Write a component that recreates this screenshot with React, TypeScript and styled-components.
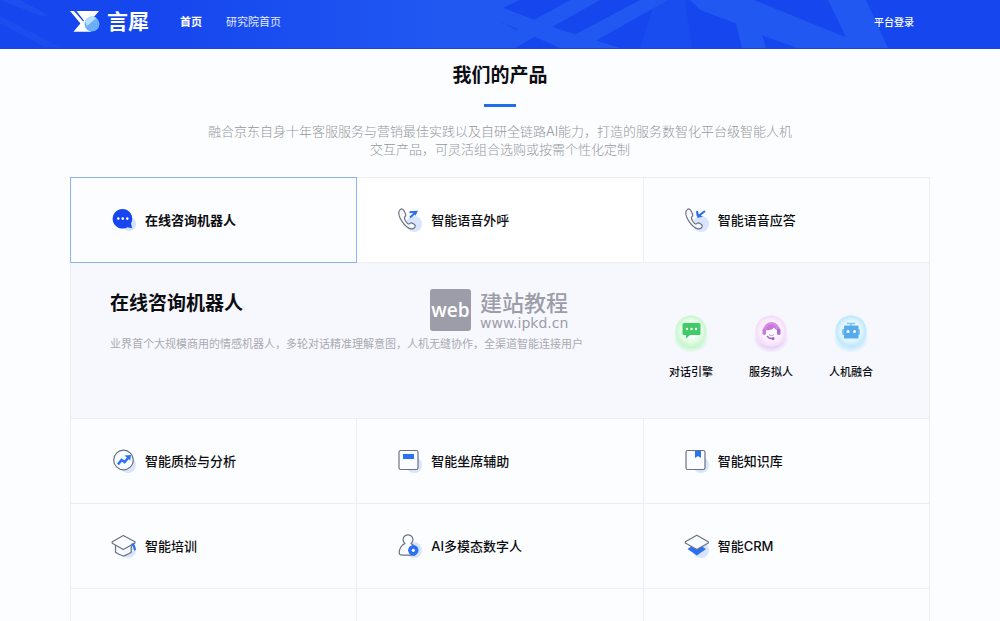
import React from "react";
import styled, { createGlobalStyle, css } from "styled-components";

const GlobalStyle = createGlobalStyle`
  * { box-sizing: border-box; }
  body {
    margin: 0;
    background: #fcfdff;
    color: #0c0d10;
    font-family: Inter, "Noto Sans CJK SC", sans-serif;
  }
  h1, h2, p, ul { margin: 0; padding: 0; }
  button { font: inherit; color: inherit; }
`;

const Page = styled.div`
  height: 100vh;
  overflow-x: hidden;
  overflow-y: auto;
  scrollbar-width: none;
`;

const Header = styled.header`
  position: relative;
  display: flex;
  align-items: center;
  height: 49px;
  padding: 0 7% 4px;
  background: #1546ee;
  border-bottom: 1px solid #1a46d6;
  color: #fff;
`;

const HeaderArt = styled.svg`
  position: absolute;
  inset: 0;
  width: 100%;
  height: 100%;
`;

const Brand = styled.a`
  position: relative;
  display: flex;
  align-items: center;
  gap: 6px;
  color: #fff;
  font-size: 21px;
  line-height: 24px;
  font-weight: 700;
  text-decoration: none;
`;

const Nav = styled.nav`
  position: relative;
  display: flex;
  flex: 1;
  gap: 24px;
  margin-left: 31px;
`;

const NavLink = styled.a<{ $active?: boolean }>`
  color: ${(p) => (p.$active ? "#fff" : "#e3eaff")};
  font-size: 11px;
  line-height: 16px;
  font-weight: ${(p) => (p.$active ? 700 : 400)};
  text-decoration: none;
`;

const Login = styled.button`
  position: relative;
  margin-right: 16px;
  padding: 0;
  border: 0;
  background: none;
  color: #fff;
  font-size: 10px;
  line-height: 16px;
  font-weight: 500;
`;

const Main = styled.main`
  padding: 13px 7% 0;
`;

const Intro = styled.section`
  display: flex;
  flex-direction: column;
  align-items: center;
  text-align: center;
`;

const Title = styled.h1`
  font-size: 19px;
  line-height: 28px;
  font-weight: 700;
`;

const Rule = styled.span`
  width: 32px;
  height: 3px;
  margin: 14px 0 15px;
  background: #1f6fe8;
`;

const Lead = styled.p`
  max-width: 590px;
  color: #96979b;
  font-size: 13px;
  line-height: 18px;
  font-weight: 300;
`;

const Products = styled.section`
  display: grid;
  grid-template-columns: repeat(3, 1fr);
  margin-top: 19px;
  padding: 1px 0 0 1px;
`;

const edge = css`
  margin: -1px 0 0 -1px;
  border: 1px solid #eceef2;
`;

const Product = styled.button<{ $active?: boolean; $hover?: boolean }>`
  ${edge}
  display: flex;
  align-items: center;
  gap: 8px;
  min-height: 86px;
  padding: 0 40px;
  background: ${(p) => (p.$hover ? "#fff" : "#fcfdff")};
  font-size: 13px;
  line-height: 20px;
  font-weight: ${(p) => (p.$active ? 700 : 500)};
  text-align: left;
  ${(p) =>
    p.$active &&
    css`
      position: relative;
      z-index: 1;
      border-color: #8fb1f5;
    `}
`;

const Detail = styled.article`
  ${edge}
  position: relative;
  grid-column: 1 / -1;
  display: flex;
  justify-content: space-between;
  min-height: 157px;
  padding: 27px 38px 0 39px;
  background: #f7f8fe;
`;

const DetailTitle = styled.h2`
  font-size: 19px;
  line-height: 28px;
  font-weight: 700;
`;

const DetailText = styled.p`
  margin-top: 18px;
  color: #a9aab1;
  font-size: 11px;
  line-height: 16px;
`;

const Features = styled.ul`
  display: flex;
  padding-top: 17px;
  list-style: none;
`;

const Feature = styled.li`
  display: flex;
  flex-direction: column;
  align-items: center;
  gap: 9px;
  width: 80px;
  font-size: 11px;
  line-height: 16px;
  font-weight: 500;
`;

const Watermark = styled.div`
  position: absolute;
  top: 26px;
  left: 50%;
  display: flex;
  align-items: center;
  gap: 9px;
  margin-left: -70px;
  color: #9c9da9;
`;

const WatermarkBadge = styled.span`
  width: 41px;
  height: 42px;
  border-radius: 3px;
  background: #9c9da9;
  color: #fff;
  font: 600 19px/42px "Open Sans", sans-serif;
  text-align: center;
`;

const WatermarkName = styled.span`
  display: block;
  font-size: 22px;
  line-height: 25px;
  font-weight: 500;
`;

const WatermarkUrl = styled.span`
  display: block;
  font: 14px/14px "DejaVu Sans", sans-serif;
`;

const Icon = ({ children }: { children?: React.ReactNode }) => (
  <svg width="26" height="26" viewBox="0 0 26 26" fill="none" aria-hidden="true">
    {children}
  </svg>
);

const Shade = () => <circle cx="17" cy="17" r="8" fill="#d8e5fd" />;
const line = { stroke: "#6b7280", strokeWidth: 1.2, strokeLinejoin: "round" as const, strokeLinecap: "round" as const };
const handset =
  "M5.6 2.2C4.2 1.4 2 3 1.8 5.400 1.400 10.500 8 20.800 14 21.800c2.600.400 4.600-1.600 4.200-3.200-.300-1.300-3.200-3-4.600-2.600-1 .300-1.200 1.200-2.100 1-1.700-.500-4.200-4.600-4.100-6.300 0-.900 1.100-.900 1.300-2.100C9 6.700 6.800 2.800 5.600 2.200Z";

const ChatIcon = () => (
  <Icon>
    <circle cx="18" cy="17" r="7" fill="#d3e2fd" />
    <path d="M11.500 2a9.800 9.800 0 1 0 5 18.200l4.500 1-1-4.600A9.800 9.800 0 0 0 11.500 2Z" fill="#1745ef" />
    <circle cx="7.300" cy="11.600" r="1.300" fill="#fff" />
    <circle cx="11.800" cy="11.600" r="1.300" fill="#fff" />
    <circle cx="16.300" cy="11.600" r="1.300" fill="#fff" />
  </Icon>
);

const CallOutIcon = () => (
  <Icon>
    <Shade />
    <path d={handset} fill="#f6f9ff" {...line} />
    <path d="M13 10.500 18.500 5.500M12.500 5.200l7-.400" stroke="#2a6ff0" strokeWidth="2" />
    <path d="M16 4.200 21 3.800 18.500 8.800Z" fill="#2a6ff0" />
  </Icon>
);

const CallInIcon = () => (
  <Icon>
    <Shade />
    <path d={handset} fill="#f6f9ff" {...line} />
    <path d="m21 4-6.500 5M13 4.200l.800 5" stroke="#2a6ff0" strokeWidth="2.200" />
    <path d="M13 6.500 13.500 11l5.500-1.500Z" fill="#2a6ff0" />
  </Icon>
);

const TrendIcon = () => (
  <Icon>
    <Shade />
    <circle cx="12.500" cy="12" r="9.800" fill="#f8fbff" {...line} />
    <path d="m7 16.500 3.600-4.500 3 2 4.400-5" stroke="#2a72f3" strokeWidth="2.500" />
    <path d="m13.500 7.500 6.500-.500-.800 5.500Z" fill="#2a72f3" />
  </Icon>
);

const DeskIcon = () => (
  <Icon>
    <Shade />
    <rect x="2" y="2.500" width="19" height="19" rx="1.800" fill="#fafcff" {...line} />
    <rect x="6" y="6" width="11" height="5" fill="#2a72f3" />
  </Icon>
);

const BookIcon = () => (
  <Icon>
    <Shade />
    <rect x="2" y="2.500" width="19" height="19" rx="1.800" fill="#fafcff" {...line} />
    <path d="M11 3h6v7l-3-2-3 2Z" fill="#2a72f3" />
  </Icon>
);

const CapIcon = () => (
  <Icon>
    <Shade />
    <path d="M4.500 11v8.300c2.500 2 5.500 2.700 7.800 3.700 2.500-1 5.500-1.700 7.900-3.700V11" fill="#f6f9ff" {...line} />
    <path d="M12.300 2.500 1.200 8.700v1.500l11.100 6.300L24 10V8.700Z" fill="#fafcff" {...line} />
    <path d="m20.500 12 1.700-.800 2 6" stroke="#2a72f3" strokeWidth="2.200" />
  </Icon>
);

const PersonIcon = () => (
  <Icon>
    <Shade />
    <path d="M11 1.800a4.800 4.800 0 0 0-3 8.600C4.400 12 1.800 16.500 2.200 20c.200 1.600 1.300 2.200 3 2.200h12.300V14c-.800-1.600-2-2.800-3.500-3.600A4.800 4.800 0 0 0 11 1.800Z" fill="#fafcff" {...line} />
    <circle cx="16.300" cy="17.300" r="5.200" fill="#2a72f3" />
    <circle cx="16.300" cy="17.300" r="1.600" fill="#fff" />
  </Icon>
);

const LayersIcon = () => (
  <Icon>
    <Shade />
    <path d="M3.500 16 12.800 22.500l9.200-6.500-4-2.500H7Z" fill="#2a72f3" />
    <path d="M12.800 2.200 1.300 8.800v1.200l11.500 6.500 11.500-6.500V8.800Z" fill="#f8fbff" {...line} />
  </Icon>
);

const Orb = ({ id, tint, glow, children }: { id: string; tint: string; glow: string; children: React.ReactNode }) => (
  <svg width="48" height="48" viewBox="0 0 48 48" fill="none" aria-hidden="true">
    <defs>
      <radialGradient id={id + "-glow"}>
        <stop offset="0.5" stopColor={glow} />
        <stop offset="1" stopColor={glow} stopOpacity="0" />
      </radialGradient>
      <radialGradient id={id}>
        <stop offset="0.3" stopColor="#fff" />
        <stop offset="1" stopColor={tint} />
      </radialGradient>
    </defs>
    <ellipse cx="24" cy="31" rx="18" ry="15" fill={`url(#${id}-glow)`} />
    <circle cx="24" cy="24" r="15.500" fill={`url(#${id})`} />
    <circle cx="24" cy="24" r="14.500" stroke={tint} strokeWidth="2" />
    {children}
  </svg>
);

const DialogOrb = () => (
  <Orb id="dialog" tint="#cdf8d3" glow="#b5f3bf">
    <path d="M17 16h15a1.500 1.500 0 0 1 1.500 1.500v9A1.500 1.500 0 0 1 32 28H23l-4 3.500V28h-2a1.500 1.500 0 0 1-1.500-1.500v-9A1.500 1.500 0 0 1 17 16Z" fill="#40cb67" />
    <circle cx="20" cy="22" r="1.200" fill="#fff" />
    <circle cx="24.500" cy="22" r="1.200" fill="#fff" />
    <circle cx="29" cy="22" r="1.200" fill="#fff" />
  </Orb>
);

const AgentOrb = () => (
  <Orb id="agent" tint="#f6dffa" glow="#dfc4f5">
    <path d="M17.500 24a7 7.500 0 0 1 14 0" stroke="#d58be2" strokeWidth="3" />
    <rect x="15.500" y="21.500" width="3.500" height="6.500" rx="1.700" fill="#c97bdc" />
    <rect x="30" y="21.500" width="3.500" height="6.500" rx="1.700" fill="#ad6cd8" />
    <path d="M19 23c4 1 7-1 8-3 1 2 2.500 3 3 3v2c0 3-2.500 6-5.500 6S19 28 19 25Z" fill="#fff" />
    <path d="M19 23c0-3 2.500-5.500 5.500-5.500S30 20 30 23c-1.500-.500-2.500-1.500-3-2.500-2 2.500-5 3-8 2.500Z" fill="#c878dd" />
    <path d="M20 29c1.200 1.800 2.700 2.500 5 2.500" stroke="#ad62d8" strokeWidth="1.400" />
    <circle cx="26" cy="31.500" r="1.500" fill="#a65cd6" />
    <path d="M22 27.500c1.500 1.300 3.500 1.300 5 0" stroke="#b98be0" />
  </Orb>
);

const RobotOrb = () => (
  <Orb id="robot" tint="#c3eafd" glow="#b3e3fd">
    <path d="M20 16.500h8M24 16v4" stroke="#7cc4f2" strokeWidth="1.600" />
    <rect x="15" y="22" width="18" height="6" rx="1" fill="#7cc2f0" />
    <rect x="17" y="18.500" width="14.500" height="13" rx="1" fill="#57abec" />
    <circle cx="21" cy="24.500" r="1.500" fill="#fff" />
    <circle cx="27.500" cy="24.500" r="1.500" fill="#fff" />
  </Orb>
);

const Logo = () => (
  <svg width="31" height="24" viewBox="0 0 31 24" aria-hidden="true">
    <path d="M0 1h4l10.500 12-2.300 2.500Z" fill="#fff" />
    <path d="M6.500 1H29L20 11.500 15 12Z" fill="#fff" />
    <path d="M3.500 21.800 12 11.500l5-1 4 11.300Z" fill="#fff" />
    <circle cx="22" cy="14" r="7.500" fill="#69aef8" />
    <path d="M26.500 8A7.500 7.500 0 0 0 15 11.500L17 16Z" fill="#b9ddff" />
  </svg>
);

const topRow = [
  { name: "在线咨询机器人", icon: <ChatIcon />, active: true },
  { name: "智能语音外呼", icon: <CallOutIcon />, hover: true },
  { name: "智能语音应答", icon: <CallInIcon /> },
];

const otherRows = [
  { name: "智能质检与分析", icon: <TrendIcon /> },
  { name: "智能坐席辅助", icon: <DeskIcon /> },
  { name: "智能知识库", icon: <BookIcon /> },
  { name: "智能培训", icon: <CapIcon /> },
  { name: "AI多模态数字人", icon: <PersonIcon /> },
  { name: "智能CRM", icon: <LayersIcon /> },
];

const features = [
  { name: "对话引擎", icon: <DialogOrb /> },
  { name: "服务拟人", icon: <AgentOrb /> },
  { name: "人机融合", icon: <RobotOrb /> },
];

export default function App() {
  return (
    <Page>
      <GlobalStyle />
      <Header>
        <HeaderArt viewBox="0 0 1000 49" preserveAspectRatio="none" aria-hidden="true">
          <defs>
            <linearGradient id="sheen">
              <stop offset="0" stopColor="#2158f2" stopOpacity="0" />
              <stop offset="0.8" stopColor="#2158f2" />
            </linearGradient>
          </defs>
          <path d="M150 0H520L503 8 500 22 524 35 485 49H150Z" fill="url(#sheen)" />
          <g fill="#2158f2">
            <path d="M498 6 503 8 560 30 620 49H560L498 21Z" />
            <path d="M484 49 570 0h30L515 49Z" />
            <path d="M570 38 640 0h28L590 45Z" />
            <path d="M690 0h64L846 38 828 0h38l22 49H797L762 36l4 13H742L736 24 700 10Z" />
            <path d="M640 49 655 0h30l7 49Z" opacity="0.4" />
            <path d="M20 0 50 16 40 16 0 0Z" opacity="0.5" />
            <path d="M0 16 60 48H45L0 24Z" opacity="0.4" />
          </g>
        </HeaderArt>
        <Brand href="#">
          <Logo />
          言犀
        </Brand>
        <Nav>
          <NavLink href="#" $active>首页</NavLink>
          <NavLink href="#">研究院首页</NavLink>
        </Nav>
        <Login type="button">平台登录</Login>
      </Header>
      <Main>
        <Intro>
          <Title>我们的产品</Title>
          <Rule />
          <Lead>
            融合京东自身十年客服服务与营销最佳实践以及自研全链路AI能力，打造的服务数智化平台级智能人机交互产品，可灵活组合选购或按需个性化定制
          </Lead>
        </Intro>
        <Products>
          {topRow.map((p) => (
            <Product key={p.name} type="button" $active={p.active} $hover={p.hover}>
              {p.icon}
              {p.name}
            </Product>
          ))}
          <Detail>
            <div>
              <DetailTitle>在线咨询机器人</DetailTitle>
              <DetailText>
                业界首个大规模商用的情感机器人，多轮对话精准理解意图，人机无缝协作，全渠道智能连接用户
              </DetailText>
            </div>
            <Features>
              {features.map((f) => (
                <Feature key={f.name}>
                  {f.icon}
                  {f.name}
                </Feature>
              ))}
            </Features>
            <Watermark>
              <WatermarkBadge>web</WatermarkBadge>
              <div>
                <WatermarkName>建站教程</WatermarkName>
                <WatermarkUrl>www.ipkd.cn</WatermarkUrl>
              </div>
            </Watermark>
          </Detail>
          {otherRows.map((p) => (
            <Product key={p.name} type="button">
              {p.icon}
              {p.name}
            </Product>
          ))}
          <Product as="div" />
          <Product as="div" />
          <Product as="div" />
        </Products>
      </Main>
    </Page>
  );
}
